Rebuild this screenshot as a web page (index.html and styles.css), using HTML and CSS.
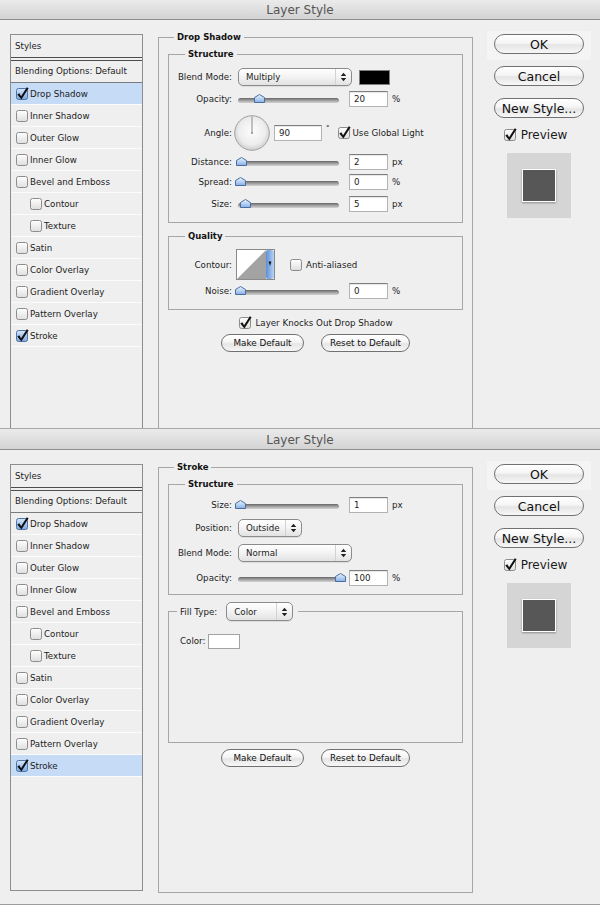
FILE: index.html
```html
<!DOCTYPE html>
<html>

<head>
    <meta charset="UTF-8">
    <title>Layer Style</title>
    <link rel="stylesheet" href="styles.css">
</head>

<body>

    <!-- shared glyphs: checkboxes, slider thumb, popup arrows -->
    <svg class="defs" width="0" height="0">
        <defs>
            <linearGradient id="g-box" x1="0" y1="0" x2="0" y2="1">
                <stop offset="0" stop-color="#ffffff" />
                <stop offset="1" stop-color="#dedede" />
            </linearGradient>
            <linearGradient id="g-blue" x1="0" y1="0" x2="0" y2="1">
                <stop offset="0" stop-color="#d6e6fb" />
                <stop offset="1" stop-color="#7ea8df" />
            </linearGradient>
            <linearGradient id="g-thumb" x1="0" y1="0" x2="0" y2="1">
                <stop offset="0" stop-color="#eef5fe" />
                <stop offset="1" stop-color="#86b0e6" />
            </linearGradient>
            <linearGradient id="g-strip" x1="0" y1="0" x2="1" y2="0">
                <stop offset="0" stop-color="#5b8fd9" />
                <stop offset="1" stop-color="#b9d3f4" />
            </linearGradient>
            <radialGradient id="g-dial" cx="50%" cy="45%" r="55%">
                <stop offset="0" stop-color="#fdfdfd" />
                <stop offset="0.7" stop-color="#ededed" />
                <stop offset="1" stop-color="#cdcdcd" />
            </radialGradient>
            <symbol id="cb-off" viewBox="0 0 14 14">
                <rect x="1.5" y="1.5" width="11" height="11" rx="2" fill="url(#g-box)" stroke="#8c8c8c" />
            </symbol>
            <symbol id="cb-on" viewBox="0 0 14 14">
                <rect x="1.5" y="1.5" width="11" height="11" rx="2" fill="url(#g-box)" stroke="#8c8c8c" />
                <path d="M2.3 7.6 L4.3 6.3 L6.1 9.2 L11.8 0.3 L13.6 1.2 L6.4 12.4 Z" fill="#111" />
            </symbol>
            <symbol id="cb-sel" viewBox="0 0 14 14">
                <rect x="1.5" y="1.5" width="11" height="11" rx="2" fill="url(#g-blue)" stroke="#4f74a8" />
                <path d="M2.3 7.6 L4.3 6.3 L6.1 9.2 L11.8 0.3 L13.6 1.2 L6.4 12.4 Z" fill="#111" />
            </symbol>
            <symbol id="thumb" viewBox="0 0 11 9">
                <path d="M5.5 0.5 L10.5 3.5 V8.5 H0.5 V3.5 Z" fill="url(#g-thumb)" stroke="#4a6d9f" />
            </symbol>
            <symbol id="arrows" viewBox="0 0 7 11">
                <path d="M0.5 4.5 L3.5 0.8 L6.5 4.5 Z M0.5 6.5 L3.5 10.2 L6.5 6.5 Z" fill="#222" />
            </symbol>
        </defs>
    </svg>

    <!-- Drop Shadow -->
    <div class="dialog dialog-top">
        <div class="titlebar">Layer Style</div>
        <div class="dialog-body">

            <div class="styles">
                <div class="styles-head">Styles</div>
                <div class="styles-blend">Blending Options: Default</div>
                <ul class="styles-list">
                    <li class="is-selected"><svg class="cb"><use href="#cb-sel" /></svg>Drop Shadow</li>
                    <li><svg class="cb"><use href="#cb-off" /></svg>Inner Shadow</li>
                    <li><svg class="cb"><use href="#cb-off" /></svg>Outer Glow</li>
                    <li><svg class="cb"><use href="#cb-off" /></svg>Inner Glow</li>
                    <li><svg class="cb"><use href="#cb-off" /></svg>Bevel and Emboss</li>
                    <li class="sub"><svg class="cb"><use href="#cb-off" /></svg>Contour</li>
                    <li class="sub"><svg class="cb"><use href="#cb-off" /></svg>Texture</li>
                    <li><svg class="cb"><use href="#cb-off" /></svg>Satin</li>
                    <li><svg class="cb"><use href="#cb-off" /></svg>Color Overlay</li>
                    <li><svg class="cb"><use href="#cb-off" /></svg>Gradient Overlay</li>
                    <li><svg class="cb"><use href="#cb-off" /></svg>Pattern Overlay</li>
                    <li><svg class="cb"><use href="#cb-sel" /></svg>Stroke</li>
                </ul>
            </div>

            <fieldset class="group main">
                <legend>Drop Shadow</legend>
                <div class="main-body">

                    <fieldset class="group sub">
                        <legend>Structure</legend>
                        <div class="rows">
                            <div class="row">
                                <span class="lbl">Blend Mode:</span>
                                <span class="select w-blend"><span class="select-text">Multiply</span><span class="select-arr"><svg><use href="#arrows" /></svg></span></span>
                                <span class="swatch"></span>
                            </div>
                            <div class="row">
                                <span class="lbl">Opacity:</span>
                                <span class="slider" style="--v: 0.19"><span class="track"></span><svg class="thumb"><use href="#thumb" /></svg></span>
                                <span class="field">20</span>
                                <span class="unit">%</span>
                            </div>
                            <div class="row r-angle">
                                <span class="lbl">Angle:</span>
                                <svg class="dial" viewBox="0 0 36 36">
                                    <circle cx="18" cy="18" r="17.3" fill="url(#g-dial)" stroke="#a2a2a2" />
                                    <line x1="18" y1="18" x2="18" y2="1.5" stroke="#8a8a8a" />
                                    <circle cx="18" cy="18" r="0.9" fill="#8a8a8a" />
                                </svg>
                                <span class="field field-angle">90</span>
                                <span class="deg">°</span>
                                <svg class="cb cb-gap"><use href="#cb-on" /></svg>
                                <span class="cb-text">Use Global Light</span>
                            </div>
                            <div class="row r-short">
                                <span class="lbl">Distance:</span>
                                <span class="slider" style="--v: 0.01"><span class="track"></span><svg class="thumb"><use href="#thumb" /></svg></span>
                                <span class="field">2</span>
                                <span class="unit">px</span>
                            </div>
                            <div class="row">
                                <span class="lbl">Spread:</span>
                                <span class="slider" style="--v: 0"><span class="track"></span><svg class="thumb"><use href="#thumb" /></svg></span>
                                <span class="field">0</span>
                                <span class="unit">%</span>
                            </div>
                            <div class="row">
                                <span class="lbl">Size:</span>
                                <span class="slider" style="--v: 0.045"><span class="track"></span><svg class="thumb"><use href="#thumb" /></svg></span>
                                <span class="field">5</span>
                                <span class="unit">px</span>
                            </div>
                        </div>
                    </fieldset>

                    <fieldset class="group sub quality">
                        <legend>Quality</legend>
                        <div class="q-rows">
                            <div class="row r-contour">
                                <span class="lbl">Contour:</span>
                                <svg class="contour" viewBox="0 0 39 31">
                                    <rect x="0.5" y="0.5" width="38" height="30" fill="#fff" stroke="#8a8a8a" />
                                    <path d="M1 30 L30 1 L30 30 Z" fill="#a3a3a3" />
                                    <rect x="30" y="1" width="8" height="29" rx="2" fill="url(#g-strip)" />
                                    <path d="M32.6 12.5 H35.4 L34 17 Z" fill="#111" />
                                </svg>
                                <svg class="cb cb-aa"><use href="#cb-off" /></svg>
                                <span class="cb-text">Anti-aliased</span>
                            </div>
                            <div class="row r-noise">
                                <span class="lbl">Noise:</span>
                                <span class="slider" style="--v: 0"><span class="track"></span><svg class="thumb"><use href="#thumb" /></svg></span>
                                <span class="field">0</span>
                                <span class="unit">%</span>
                            </div>
                        </div>
                    </fieldset>

                    <div class="check-row">
                        <svg class="cb"><use href="#cb-on" /></svg>
                        <span class="cb-text">Layer Knocks Out Drop Shadow</span>
                    </div>
                    <div class="btn-row">
                        <span class="btn btn-sm w-make">Make Default</span>
                        <span class="btn btn-sm w-reset">Reset to Default</span>
                    </div>
                </div>
            </fieldset>

            <div class="side">
                <div class="ok-wrap"><span class="btn btn-lg">OK</span></div>
                <span class="btn btn-lg cancel">Cancel</span>
                <span class="btn btn-lg new">New Style...</span>
                <div class="preview-check"><svg class="cb"><use href="#cb-on" /></svg>Preview</div>
                <div class="preview-box"><div class="preview-swatch"></div></div>
            </div>
        </div>
    </div>

    <!-- Stroke -->
    <div class="dialog dialog-bottom">
        <div class="titlebar">Layer Style</div>
        <div class="dialog-body">

            <div class="styles">
                <div class="styles-head">Styles</div>
                <div class="styles-blend">Blending Options: Default</div>
                <ul class="styles-list">
                    <li><svg class="cb"><use href="#cb-sel" /></svg>Drop Shadow</li>
                    <li><svg class="cb"><use href="#cb-off" /></svg>Inner Shadow</li>
                    <li><svg class="cb"><use href="#cb-off" /></svg>Outer Glow</li>
                    <li><svg class="cb"><use href="#cb-off" /></svg>Inner Glow</li>
                    <li><svg class="cb"><use href="#cb-off" /></svg>Bevel and Emboss</li>
                    <li class="sub"><svg class="cb"><use href="#cb-off" /></svg>Contour</li>
                    <li class="sub"><svg class="cb"><use href="#cb-off" /></svg>Texture</li>
                    <li><svg class="cb"><use href="#cb-off" /></svg>Satin</li>
                    <li><svg class="cb"><use href="#cb-off" /></svg>Color Overlay</li>
                    <li><svg class="cb"><use href="#cb-off" /></svg>Gradient Overlay</li>
                    <li><svg class="cb"><use href="#cb-off" /></svg>Pattern Overlay</li>
                    <li class="is-selected"><svg class="cb"><use href="#cb-sel" /></svg>Stroke</li>
                </ul>
            </div>

            <fieldset class="group main">
                <legend>Stroke</legend>
                <div class="main-body">

                    <fieldset class="group sub">
                        <legend>Structure</legend>
                        <div class="rows rows-gap">
                            <div class="row r-short">
                                <span class="lbl">Size:</span>
                                <span class="slider" style="--v: 0"><span class="track"></span><svg class="thumb"><use href="#thumb" /></svg></span>
                                <span class="field">1</span>
                                <span class="unit">px</span>
                            </div>
                            <div class="row">
                                <span class="lbl">Position:</span>
                                <span class="select w-pos"><span class="select-text">Outside</span><span class="select-arr"><svg><use href="#arrows" /></svg></span></span>
                            </div>
                            <div class="row">
                                <span class="lbl">Blend Mode:</span>
                                <span class="select w-blend"><span class="select-text">Normal</span><span class="select-arr"><svg><use href="#arrows" /></svg></span></span>
                            </div>
                            <div class="row">
                                <span class="lbl">Opacity:</span>
                                <span class="slider" style="--v: 1"><span class="track"></span><svg class="thumb"><use href="#thumb" /></svg></span>
                                <span class="field">100</span>
                                <span class="unit">%</span>
                            </div>
                        </div>
                    </fieldset>

                    <fieldset class="group sub fill">
                        <legend>
                            <span>Fill Type:</span>
                            <span class="select w-fill"><span class="select-text">Color</span><span class="select-arr"><svg><use href="#arrows" /></svg></span></span>
                        </legend>
                        <div class="fill-body">
                            <div class="color-row">
                                <span>Color:</span>
                                <span class="swatch swatch-white"></span>
                            </div>
                        </div>
                    </fieldset>

                    <div class="btn-row btn-row-fill">
                        <span class="btn btn-sm w-make">Make Default</span>
                        <span class="btn btn-sm w-reset">Reset to Default</span>
                    </div>
                </div>
            </fieldset>

            <div class="side">
                <div class="ok-wrap"><span class="btn btn-lg">OK</span></div>
                <span class="btn btn-lg cancel">Cancel</span>
                <span class="btn btn-lg new">New Style...</span>
                <div class="preview-check"><svg class="cb"><use href="#cb-on" /></svg>Preview</div>
                <div class="preview-box"><div class="preview-swatch"></div></div>
            </div>
        </div>
    </div>

</body>

</html>
```

FILE: styles.css
```css
* {
    margin: 0;
    padding: 0;
    box-sizing: border-box;
}

body {
    width: 600px;
    height: 905px;
    overflow: hidden;
    background: #efefef;
    font-family: "DejaVu Sans", Verdana, sans-serif;
    font-size: 8.7px;
    color: #1c1c1c;
}

.defs {
    display: block;
}

/* window chrome */

.titlebar {
    height: 22px;
    padding-top: 2px;
    overflow: hidden;
    border-top: 1px solid #a8a8a8;
    border-bottom: 1px solid #8e8e8e;
    background: linear-gradient(#ebebeb, #d3d3d3);
    text-align: center;
    font-size: 12px;
    line-height: 19px;
    color: #555;
}

.dialog-top .titlebar {
    height: 20px;
    padding-top: 1px;
    border-top: 0;
}

.dialog-body {
    display: flex;
    align-items: flex-start;
    padding-left: 10px;
    overflow: hidden;
}

.dialog-top .dialog-body {
    height: 408px;
}

.dialog-bottom .dialog-body {
    height: 455px;
    border-bottom: 1px solid #9c9c9c;
}

/* styles list on the left */

.styles {
    flex: none;
    width: 133px;
    height: 427px;
    margin-top: 14px;
    border: 1px solid #8d8d8d;
}

.styles-head {
    height: 26px;
    padding-left: 4px;
    line-height: 22px;
    border-bottom: 4px double #4d4d4d;
}

.styles-blend {
    height: 22px;
    padding-left: 4px;
    line-height: 21px;
    border-bottom: 1px solid #7b7b7b;
}

.styles-list {
    list-style: none;
}

.styles-list>li {
    display: flex;
    align-items: center;
    height: 22px;
    padding-left: 4px;
    border-bottom: 1px solid #fbfbfb;
}

.styles-list>li.sub {
    padding-left: 18px;
}

.styles-list>li.is-selected {
    background: #c6dbf6;
}

.cb {
    flex: none;
    width: 14px;
    height: 14px;
    margin-right: 1px;
}

/* group boxes */

.group {
    min-width: 0;
    border: 1px solid #a6a6a6;
}

.group>legend {
    padding: 0 3px;
    font-weight: bold;
    font-size: 8.5px;
    line-height: 12px;
    color: #111;
}

.main {
    flex: none;
    width: 315px;
    margin-left: 15px;
    margin-top: 11px;
    padding: 0 9px;
}

.main>legend {
    margin-left: 6px;
}

.main-body {
    height: 419px;
    padding-top: 5px;
}

.sub {
    padding: 0;
}

.sub>legend {
    margin-left: 16px;
}

.quality {
    margin-top: 7px;
}

.rows {
    display: flex;
    flex-direction: column;
    padding: 6px 0 7px;
}

.rows-gap {
    gap: 3px;
    padding-bottom: 5px;
}

.q-rows {
    padding: 7px 0 9px;
}

.row {
    display: flex;
    align-items: center;
    height: 22px;
}

.row.r-angle {
    height: 40px;
    margin-top: 3px;
}

.row.r-short {
    height: 18px;
}

.row.r-contour {
    height: 31px;
}

.row.r-noise {
    height: 18px;
    margin-top: 2px;
}

.lbl {
    flex: none;
    width: 63px;
    margin-right: 6px;
    text-align: right;
    white-space: nowrap;
}

/* controls */

.select {
    display: flex;
    align-items: center;
    height: 18px;
    border: 1px solid #8b8b8b;
    border-radius: 5px;
    background: linear-gradient(#ffffff, #f3f3f3 50%, #e2e2e2);
    box-shadow: 0 1px 0 rgba(0, 0, 0, 0.08);
    font-weight: normal;
    font-size: 8.7px;
    color: #1c1c1c;
}

.select-text {
    flex: 1;
    padding-left: 7px;
    white-space: nowrap;
}

.select-arr {
    display: flex;
    align-items: center;
    justify-content: center;
    width: 16px;
    height: 100%;
    border-left: 1px solid #d2d2d2;
}

.select-arr svg {
    width: 7px;
    height: 10px;
}

.w-blend {
    width: 114px;
}

.w-pos {
    width: 64px;
}

.w-fill {
    width: 67px;
    height: 19px;
}

.swatch {
    width: 31px;
    height: 15px;
    margin-left: 7px;
    border: 1px solid #7e7e7e;
    background: #000;
}

.swatch-white {
    width: 32px;
    margin-left: 3px;
    border-color: #a3a3a3;
    background: #fff;
}

.field {
    width: 39px;
    height: 16px;
    margin-left: 7px;
    padding-left: 4px;
    border: 1px solid #b3b3b3;
    border-top-color: #7f7f7f;
    background: #fff;
    line-height: 14px;
    box-shadow: inset 0 1px 1px rgba(0, 0, 0, 0.1);
}

.field-angle {
    width: 48px;
    margin-left: 4px;
}

.unit {
    margin-left: 4px;
}

.deg {
    align-self: flex-start;
    margin-top: 11px;
    margin-left: 4px;
    font-size: 7px;
}

.cb-gap {
    margin-left: 7px;
    margin-right: 2px;
}

.cb-aa {
    margin-left: 14px;
    margin-right: 3px;
}

.cb-text {
    white-space: nowrap;
}

.slider {
    position: relative;
    flex: none;
    width: 104px;
    height: 10px;
}

.track {
    display: block;
    width: 101px;
    height: 5px;
    margin-top: 4px;
    border-radius: 3px;
    background: linear-gradient(#666, #9c9c9c 45%, #d4d4d4);
}

.thumb {
    position: absolute;
    top: 0;
    left: calc(var(--v) * 100px - 3px);
    width: 11px;
    height: 9px;
}

.dial {
    flex: none;
    width: 36px;
    height: 36px;
    margin-left: -4px;
}

.contour {
    flex: none;
    width: 39px;
    height: 31px;
    margin-left: -2px;
}

.check-row {
    display: flex;
    align-items: center;
    justify-content: center;
    height: 15px;
    margin-top: 5px;
}

.check-row .cb {
    margin-right: 3px;
}

.btn-row {
    display: flex;
    justify-content: center;
    gap: 17px;
    margin-top: 4px;
}

.btn-row-fill {
    margin-top: 6px;
}

.btn {
    display: flex;
    align-items: center;
    justify-content: center;
    border: 1px solid #717171;
    border-radius: 10px;
    background: linear-gradient(#ffffff, #f5f5f5 45%, #e5e5e5 55%, #f7f7f7);
    color: #111;
    white-space: nowrap;
}

.btn-sm {
    height: 18px;
    font-size: 8.8px;
}

.w-make {
    width: 83px;
}

.w-reset {
    width: 89px;
}

/* fill type group */

.fill {
    margin-top: 7px;
}

.fill>legend {
    display: flex;
    align-items: center;
    gap: 9px;
    margin-left: 8px;
    padding: 0 5px 0 3px;
    font-weight: normal;
    font-size: 8.7px;
    color: #1c1c1c;
}

.fill-body {
    height: 121px;
    padding: 12px 0 0 11px;
}

.color-row {
    display: flex;
    align-items: center;
    height: 16px;
}

/* right column */

.side {
    flex: none;
    display: flex;
    flex-direction: column;
    align-items: center;
    width: 104px;
    margin-left: 14px;
    margin-top: 11px;
}

.ok-wrap {
    width: 104px;
    padding: 3px 7px 6px;
    background: #f4f4f4;
}

.btn-lg {
    width: 90px;
    height: 20px;
    font-size: 12.5px;
}

.cancel {
    margin-top: 6px;
}

.new {
    margin-top: 12px;
}

.preview-check {
    display: flex;
    align-items: center;
    height: 15px;
    margin-top: 9px;
    padding-right: 8px;
    font-size: 12px;
}

.preview-check .cb {
    margin-right: 4px;
}

.preview-box {
    display: flex;
    align-items: center;
    justify-content: center;
    width: 64px;
    height: 65px;
    margin-top: 11px;
    background: #d5d5d5;
}

.preview-swatch {
    width: 34px;
    height: 33px;
    border: 1px solid #fff;
    background: #575757;
    box-shadow: 0 1px 2px rgba(0, 0, 0, 0.35);
}
```
